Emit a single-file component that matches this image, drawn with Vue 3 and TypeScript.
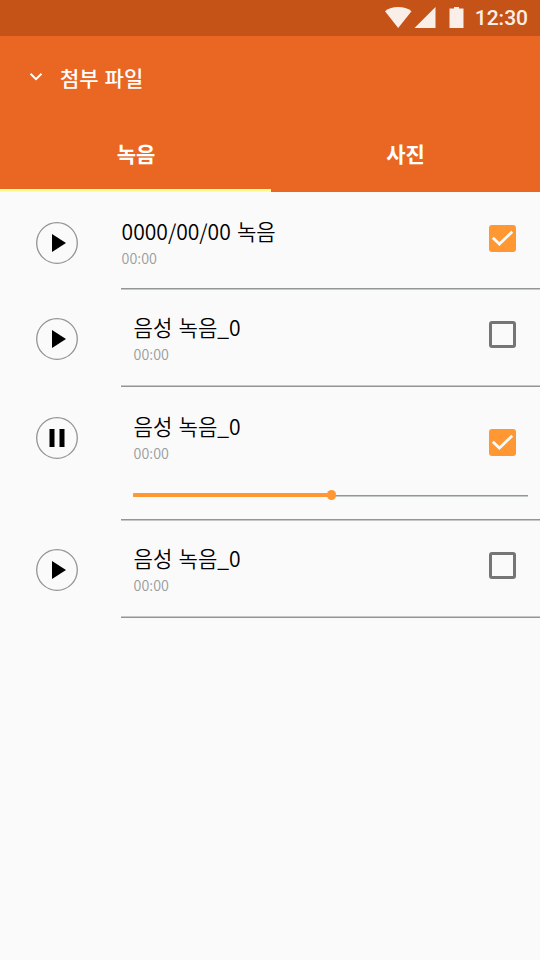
<script setup lang="ts">
import { ref } from 'vue'

interface Recording {
  id: number
  title: string
  time: string
  checked: boolean
  playing: boolean
  progress?: number
}

const tabs = ['녹음', '사진']
const activeTab = ref(0)

const recordings = ref<Recording[]>([
  { id: 1, title: '0000/00/00 녹음', time: '00:00', checked: true, playing: false },
  { id: 2, title: '음성 녹음_0', time: '00:00', checked: false, playing: false },
  { id: 3, title: '음성 녹음_0', time: '00:00', checked: true, playing: true, progress: 50.2 },
  { id: 4, title: '음성 녹음_0', time: '00:00', checked: false, playing: false },
])
</script>

<template>
  <div class="screen">
    <div class="status">
      <svg class="signals" width="80" height="22" viewBox="0 0 80 22">
        <path d="M0 4.2C3.6 1.4 8 0 13.2 0s9.700 1.400 13.300 4.200L13.200 21z" />
        <path d="M50.500 0v21H29.500z" />
        <path d="M69 0h5v1.600h4.500V21h-14V1.600H69z" />
      </svg>
      <span class="clock">12:30</span>
    </div>

    <header class="bar">
      <svg class="chevron" width="14" height="10" viewBox="0 0 14 10">
        <path d="M1.500 1.700 7 7.200l5.500-5.500" />
      </svg>
      <h1>첨부 파일</h1>
    </header>

    <nav class="tabs">
      <button
        v-for="(tab, i) in tabs"
        :key="tab"
        class="tab"
        :class="{ active: i === activeTab }"
        @click="activeTab = i"
      >{{ tab }}</button>
    </nav>

    <ul class="list">
      <li v-for="item in recordings" :key="item.id" class="row" :class="{ playing: item.playing }">
        <button class="play" @click="item.playing = !item.playing">
          <svg width="42" height="42" viewBox="0 0 42 42">
            <circle cx="21" cy="21" r="20.300" />
            <path v-if="item.playing" d="M13.500 12h5v18h-5zM23.500 12h5v18h-5z" />
            <path v-else d="M16 12v18l14-9z" />
          </svg>
        </button>
        <div class="content">
          <div class="info">
            <span class="title">{{ item.title }}</span>
            <span class="time">{{ item.time }}</span>
            <div v-if="item.progress !== undefined" class="slider">
              <div class="fill" :style="{ width: item.progress + '%' }"></div>
            </div>
          </div>
          <button class="check" :class="{ on: item.checked }" @click="item.checked = !item.checked">
            <svg v-if="item.checked" width="27" height="27" viewBox="0 0 27 27">
              <path d="M3.800 12.700l6.600 6.400L23.200 6.800" />
            </svg>
          </button>
        </div>
      </li>
    </ul>
  </div>
</template>

<style>
body {
  background: #fafafa;
}
</style>

<style scoped>
.screen {
  width: 540px;
  height: 960px;
  overflow: hidden;
  background: #fafafa;
  font-family: 'Noto Sans CJK KR', sans-serif;
}
button {
  padding: 0;
  border: 0;
  background: none;
  font: inherit;
  color: inherit;
}
svg {
  display: block;
}
.status {
  display: flex;
  justify-content: flex-end;
  height: 36px;
  padding-right: 12px;
  box-sizing: border-box;
  background: #c55217;
  color: #faeee8;
}
.signals {
  margin-top: 6.700px;
  margin-right: 9.300px;
  fill: currentColor;
}
.clock {
  font: 500 21px/36px Roboto, sans-serif;
}
.bar {
  display: flex;
  align-items: center;
  gap: 17px;
  height: 84px;
  padding: 0 0 3px 29px;
  box-sizing: border-box;
  background: #e96722;
  color: #fff;
}
.chevron {
  fill: none;
  stroke: currentColor;
  stroke-width: 2;
}
h1 {
  margin: 0;
  font-size: 21px;
  line-height: 30px;
  font-weight: 500;
  word-spacing: 1.200px;
}
.tabs {
  display: flex;
  height: 72px;
  background: #e96722;
  color: #fff;
}
.tab {
  flex: 1;
  box-sizing: border-box;
  padding: 0 0 3px 1px;
  border-bottom: 3px solid transparent;
  font-size: 21px;
  font-weight: 700;
}
.tab:last-child {
  padding-left: 0;
}
.tab.active {
  flex: 0 0 271px;
  border-color: #ffff8d;
}
.list {
  margin: 0;
  padding: 0;
  list-style: none;
}
.row {
  display: flex;
  gap: 43px;
  height: 97px;
  padding-left: 36px;
}
.row:first-child {
  height: 98px;
}
.row.playing {
  height: 134px;
}
.play {
  align-self: flex-start;
  margin-top: 28px;
}
.row:first-child .play,
.row.playing .play {
  margin-top: 30px;
}
.play circle {
  fill: none;
  stroke: #919595;
  stroke-width: 1.3;
}
.content {
  flex: 1;
  display: flex;
  justify-content: space-between;
  align-items: flex-start;
  box-sizing: border-box;
  padding: 22px 24px 0 12.600px;
  background: linear-gradient(#c5c8c8 50%, #919595 50%) bottom / 100% 2px no-repeat;
}
.row:first-child .content,
.row.playing .content {
  padding-top: 24px;
  background-image: linear-gradient(#919595 50%, #c5c8c8 50%);
}
.row:first-child .content {
  padding-left: 0.600px;
}
.info {
  display: flex;
  flex-direction: column;
}
.title {
  font-size: 21.100px;
  line-height: 30px;
  font-weight: 350;
  word-spacing: 1.400px;
  color: #000;
}
.time {
  font-size: 14.300px;
  line-height: 24px;
  font-weight: 350;
  color: #999c9c;
}
.slider {
  width: 395px;
  height: 2px;
  margin-top: 30px;
  margin-left: -0.600px;
  margin-right: -40px;
  background: linear-gradient(#919595 50%, #c5c8c8 50%);
}
.fill {
  position: relative;
  top: -2px;
  height: 4px;
  background: #ff9833;
  border-radius: 1px;
}
.fill::after {
  content: '';
  position: absolute;
  right: -5px;
  top: -2.700px;
  width: 9.400px;
  height: 9.400px;
  border-radius: 50%;
  background: #ff9833;
}
.check {
  flex: none;
  width: 27px;
  height: 27px;
  margin-top: 9px;
  box-sizing: border-box;
  border: 3px solid #757575;
  border-radius: 3px;
}
.check.on {
  border: 0;
  background: #ff9833;
}
.row.playing .check {
  margin-top: 18px;
  margin-left: -355px;
}
.check path {
  fill: none;
  stroke: #fafafa;
  stroke-width: 2.800;
}
</style>
